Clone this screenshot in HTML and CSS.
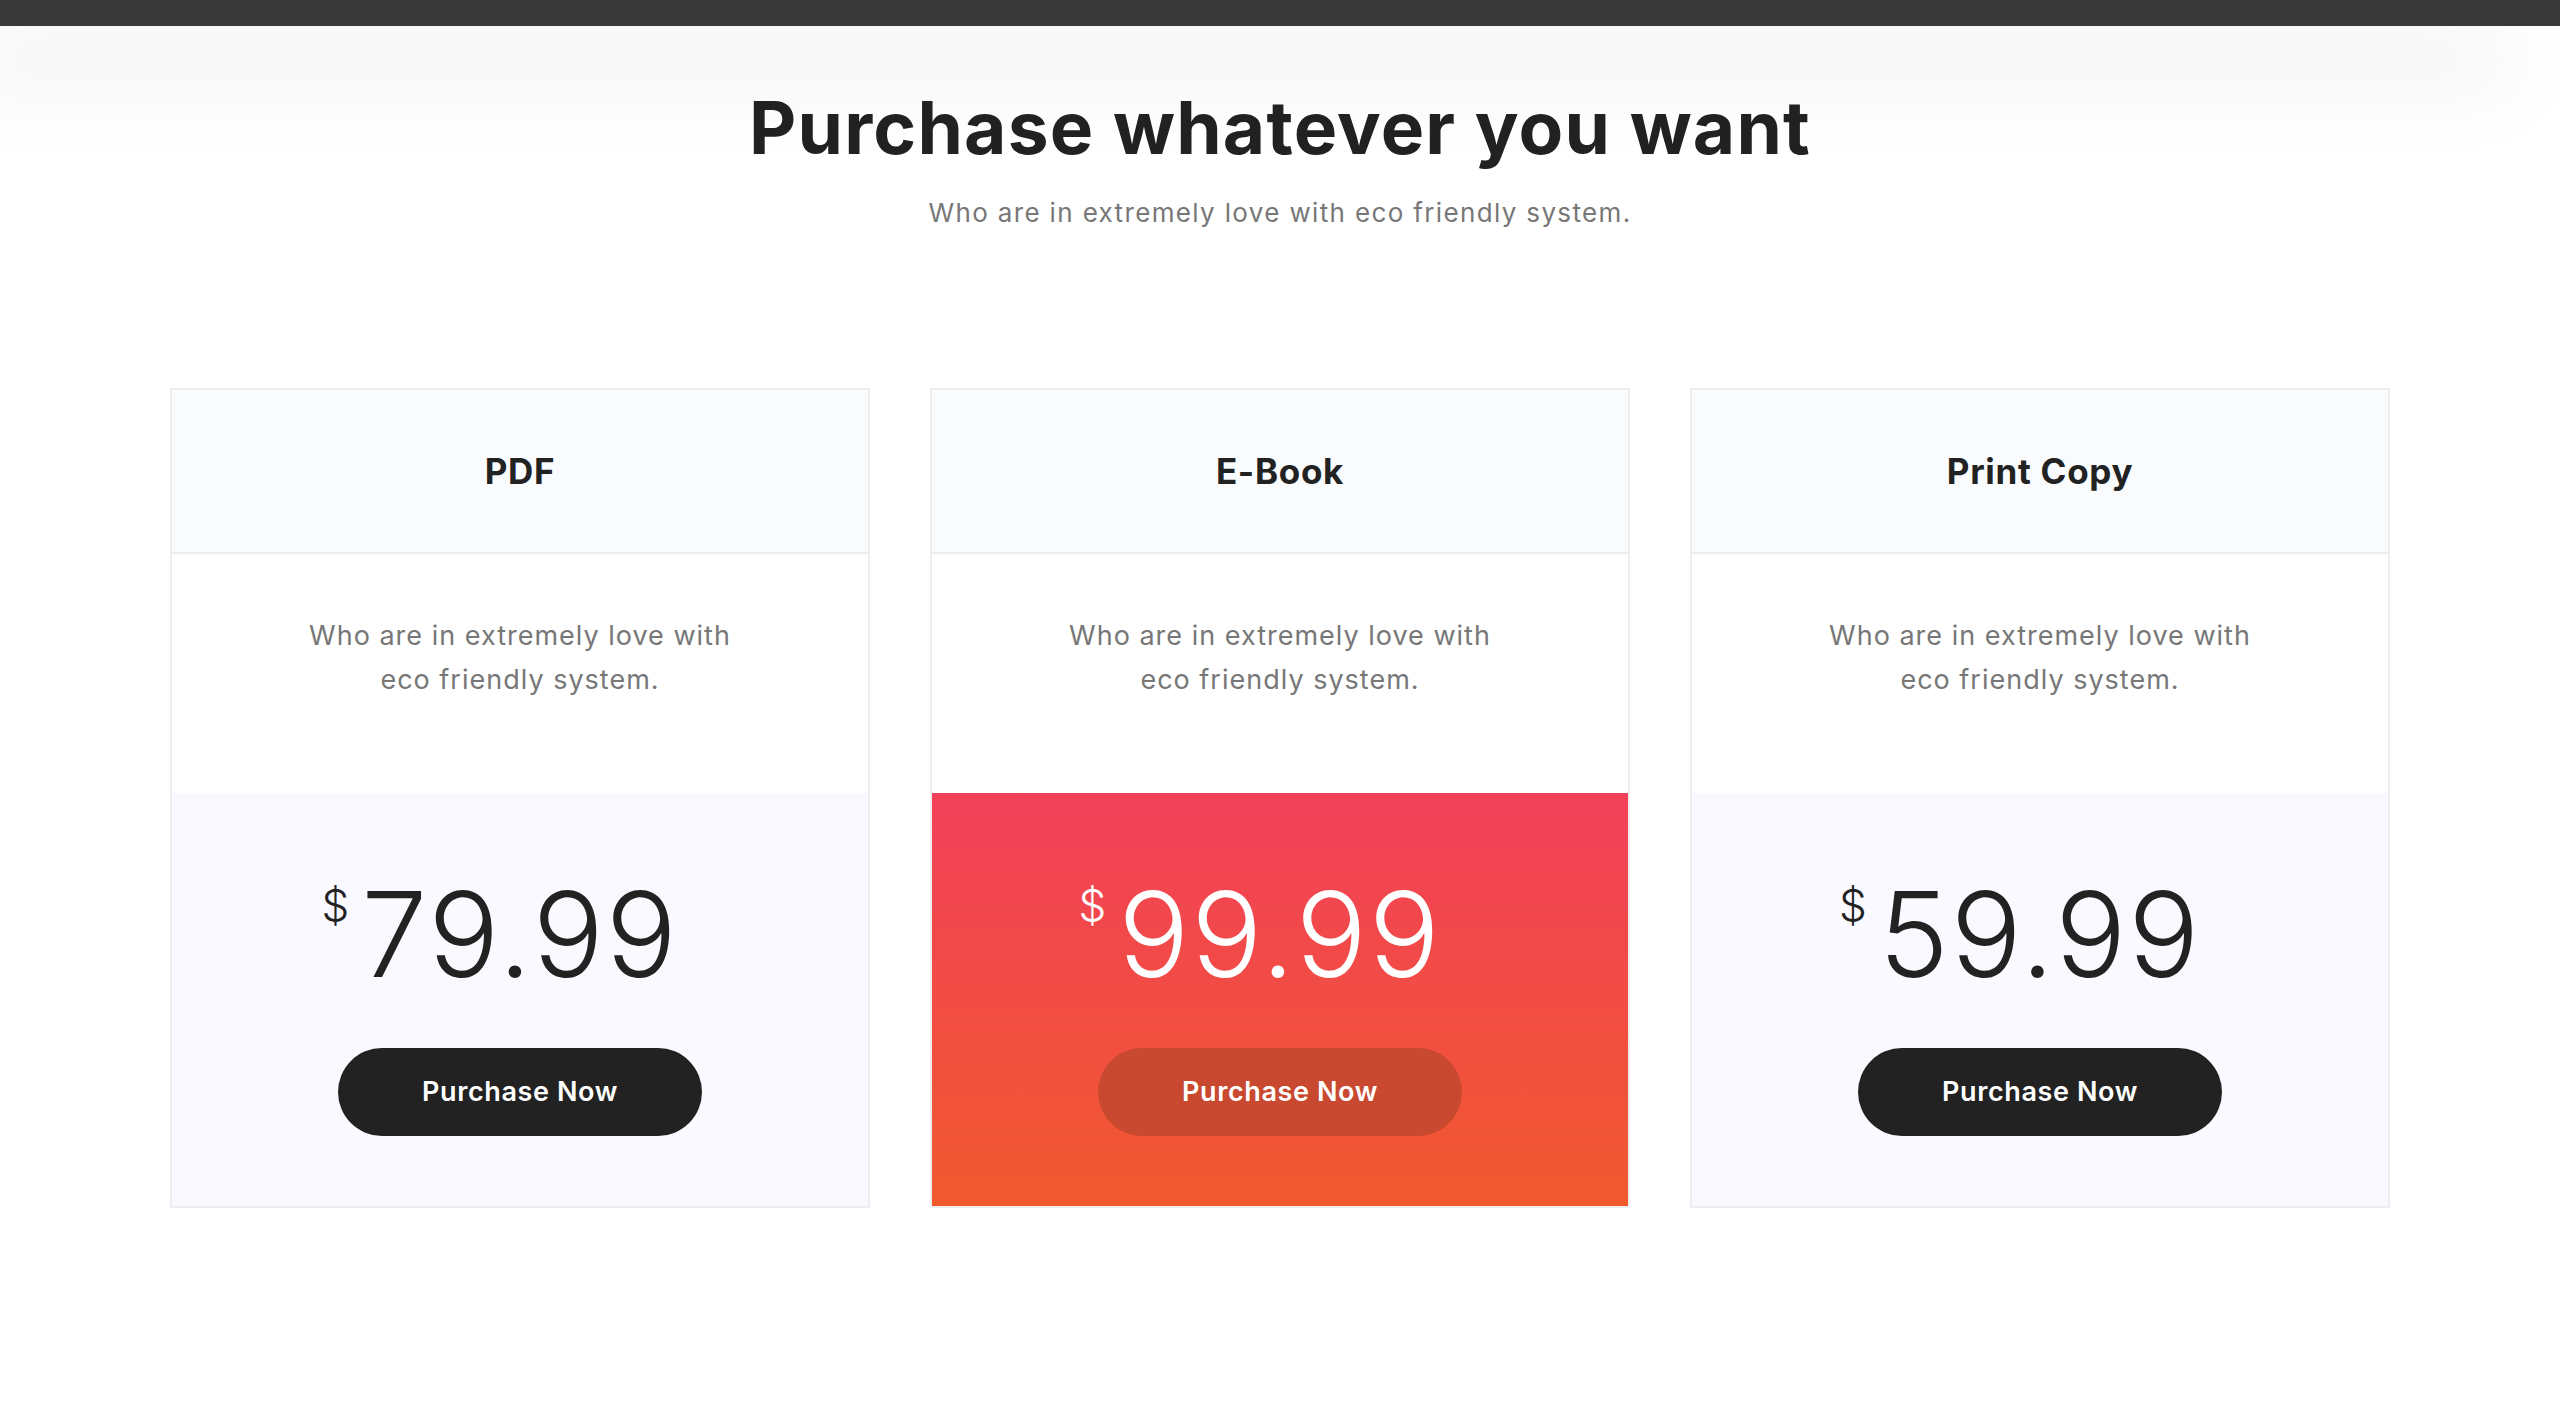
FILE: index.html
```html
<!DOCTYPE html>
<html lang="en">
<head>
<meta charset="utf-8">
<title>Purchase whatever you want</title>
<link rel="stylesheet" href="styles.css">
</head>
<body>
<header class="topbar"></header>
<section class="pricing">
  <h1 class="title">Purchase whatever you want</h1>
  <p class="subtitle">Who are in extremely love with eco friendly system.</p>
  <div class="cards">
    <div class="card">
      <div class="card-head"><h3>PDF</h3></div>
      <div class="card-desc"><p>Who are in extremely love with<br>eco friendly system.</p></div>
      <div class="card-price">
        <div class="price"><span class="cur">$</span>79.99</div>
        <a class="btn" href="#">Purchase Now</a>
      </div>
    </div>
    <div class="card featured">
      <div class="card-head"><h3>E-Book</h3></div>
      <div class="card-desc"><p>Who are in extremely love with<br>eco friendly system.</p></div>
      <div class="card-price">
        <div class="price"><span class="cur">$</span>99.99</div>
        <a class="btn" href="#">Purchase Now</a>
      </div>
    </div>
    <div class="card">
      <div class="card-head"><h3>Print Copy</h3></div>
      <div class="card-desc"><p>Who are in extremely love with<br>eco friendly system.</p></div>
      <div class="card-price">
        <div class="price"><span class="cur">$</span>59.99</div>
        <a class="btn" href="#">Purchase Now</a>
      </div>
    </div>
  </div>
</section>
</body>
</html>
```
FILE: styles.css
```css
* { box-sizing: border-box; }
html, body { margin: 0; padding: 0; background: #fff; }
body { font-family: Inter, "Open Sans", "Liberation Sans", sans-serif; color: #222; }

.topbar {
  height: 26px;
  background: #393939;
  box-shadow: -45px 45px 90px rgba(0, 0, 0, 0.13);
  position: relative;
  z-index: 1;
}

.pricing {
  padding-top: 58px;
  display: flex;
  flex-direction: column;
  align-items: center;
}

.title {
  margin: 0;
  font-size: 73px;
  line-height: 1.2;
  font-weight: 700;
  color: #222;
  letter-spacing: 1.2px;
}

.subtitle {
  margin: 21px 0 0;
  font-size: 26px;
  line-height: 1.5;
  font-weight: 400;
  color: #777;
  letter-spacing: 1.35px;
}

.cards {
  margin-top: 156px;
  display: grid;
  grid-template-columns: repeat(3, 700px);
  gap: 60px;
}

.card {
  border: 2px solid #eeeeee;
  display: flex;
  flex-direction: column;
  text-align: center;
}

.card-head {
  height: 164px;
  background: #fafbfd;
  border-bottom: 2px solid #eeeeee;
  display: flex;
  align-items: center;
  justify-content: center;
}

.card-head h3 {
  margin: 0;
  font-size: 35px;
  line-height: 1.2;
  font-weight: 700;
  color: #222;
  letter-spacing: 0.7px;
}

.card-desc {
  background: #fff;
  padding: 60px 40px 91px;
}

.card-desc p {
  margin: 0;
  font-size: 27px;
  line-height: 44px;
  color: #777;
  letter-spacing: 1px;
}

.card-price {
  background: #f9f9ff;
  padding: 82px 0 70px;
  display: flex;
  flex-direction: column;
  align-items: center;
  gap: 55px;
}

.price {
  position: relative;
  font-size: 118px;
  line-height: 1;
  font-weight: 300;
  color: #222;
  letter-spacing: 2px;
}

.cur {
  position: absolute;
  right: 100%;
  top: 8px;
  margin-right: 12px;
  font-size: 44px;
  line-height: 1;
  letter-spacing: 0;
}

.btn {
  width: 364px;
  height: 88px;
  border-radius: 44px;
  background: #222;
  color: #fff;
  text-decoration: none;
  font-size: 27px;
  font-weight: 600;
  letter-spacing: 0.6px;
  display: flex;
  align-items: center;
  justify-content: center;
}

.featured .card-price {
  background: linear-gradient(to bottom, #f2405a, #f1592e);
}

.featured .price { color: #fff; }

.featured .btn { background: #c8492f; }
```
